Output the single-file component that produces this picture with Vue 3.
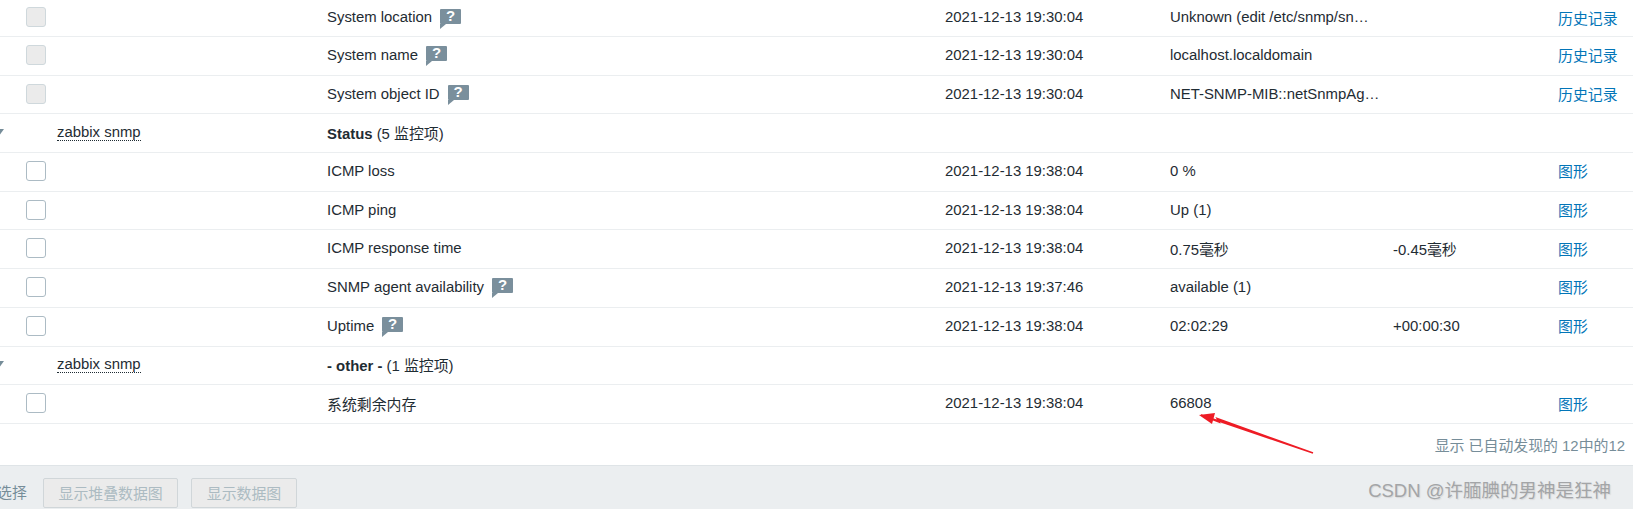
<script setup>
// rows of the latest data table, from top to bottom
const rows = [
  { name: 'System location', tip: true, time: '2021-12-13 19:30:04', value: 'Unknown (edit /etc/snmp/sn…', link: '历史记录', off: true },
  { name: 'System name', tip: true, time: '2021-12-13 19:30:04', value: 'localhost.localdomain', link: '历史记录', off: true },
  { name: 'System object ID', tip: true, time: '2021-12-13 19:30:04', value: 'NET-SNMP-MIB::netSnmpAg…', link: '历史记录', off: true },
  { group: 'Status', count: '(5 监控项)' },
  { name: 'ICMP loss', time: '2021-12-13 19:38:04', value: '0 %', link: '图形' },
  { name: 'ICMP ping', time: '2021-12-13 19:38:04', value: 'Up (1)', link: '图形' },
  { name: 'ICMP response time', time: '2021-12-13 19:38:04', value: '0.75毫秒', change: '-0.45毫秒', link: '图形' },
  { name: 'SNMP agent availability', tip: true, time: '2021-12-13 19:37:46', value: 'available (1)', link: '图形' },
  { name: 'Uptime', tip: true, time: '2021-12-13 19:38:04', value: '02:02:29', change: '+00:00:30', link: '图形' },
  { group: '- other -', count: '(1 监控项)' },
  { name: '系统剩余内存', time: '2021-12-13 19:38:04', value: '66808', link: '图形' }
]
</script>

<template>
  <div class="page">
    <div class="table">
      <div v-for="(row, i) in rows" :key="i" class="row">
        <template v-if="row.group">
          <div class="toggle"><span class="arrow"></span></div>
          <div class="host"><span class="host-link">zabbix snmp</span></div>
          <div class="group-title"><b>{{ row.group }}</b> {{ row.count }}</div>
        </template>
        <template v-else>
          <div class="toggle"><span class="check" :class="{ off: row.off }"></span></div>
          <div class="host"></div>
          <div class="item">
            {{ row.name }}
            <span v-if="row.tip" class="tip">?</span>
          </div>
          <div>{{ row.time }}</div>
          <div>{{ row.value }}</div>
          <div>{{ row.change }}</div>
          <div><a class="link">{{ row.link }}</a></div>
        </template>
      </div>
    </div>

    <div class="note">显示 已自动发现的 12中的12</div>

    <div class="footer">
      <span class="selected">选择</span>
      <button class="btn" disabled>显示堆叠数据图</button>
      <button class="btn" disabled>显示数据图</button>
      <span class="watermark">CSDN @许腼腆的男神是狂神</span>
    </div>

    <!-- red annotation arrow drawn over the screenshot -->
    <svg class="annotation" width="130" height="50" viewBox="0 0 130 50">
      <path d="M8 5 L120 43 L24 8.5 L26 12 Z" fill="#ee1c25" stroke="#ee1c25" stroke-width="1.5" />
      <path d="M6 5 L22 3 L19 14 Z" fill="#ee1c25" />
    </svg>
  </div>
</template>

<style>
html, body {
  margin: 0;
  background: #fff;
  overflow: hidden;
}
</style>

<style scoped>
.page {
  position: relative;
  width: 1633px;
  height: 509px;
  display: flex;
  flex-direction: column;
  overflow: hidden;
  font-family: "Liberation Sans", "Noto Sans CJK SC", sans-serif;
  font-size: 14.9px;
  color: #1f2c33;
}

.table {
  display: flex;
  flex-direction: column;
}

.row {
  display: grid;
  grid-template-columns: 57px 270px 618px 225px 223px 165px 1fr;
  align-items: center;
  height: 38.7px;
  box-sizing: border-box;
  padding-bottom: 2px;
  border-bottom: 1.5px solid #ebeef0;
}

.row:first-child {
  height: 37px;
}

.toggle {
  position: relative;
  height: 20px;
}

.check {
  position: absolute;
  left: 26px;
  top: 0;
  width: 20px;
  height: 20px;
  box-sizing: border-box;
  background: #fff;
  border: 1px solid #acbbc4;
  border-radius: 3px;
}

.check.off {
  background: #ebebeb;
  border-color: #cfd8dc;
}

.arrow {
  position: absolute;
  left: -6px;
  top: 7px;
  border-left: 5px solid transparent;
  border-right: 5px solid transparent;
  border-top: 7px solid #768d99;
}

.host-link {
  border-bottom: 1px dotted #1f2c33;
}

.group-title {
  grid-column: span 5;
}

.item {
  display: flex;
  align-items: center;
  gap: 8px;
}

.tip {
  position: relative;
  top: -1px;
  width: 21px;
  height: 15px;
  border-radius: 1px;
  background: #7a8f9c;
  color: #fff;
  font-size: 15px;
  font-weight: bold;
  line-height: 13px;
  text-align: center;
}

.tip::after {
  content: "";
  position: absolute;
  left: 0;
  top: 15px;
  border-top: 5px solid #7a8f9c;
  border-right: 6px solid transparent;
}

.link {
  color: #0275b8;
}

.note {
  height: 41px;
  padding-right: 8px;
  display: flex;
  align-items: center;
  justify-content: flex-end;
  color: #768d99;
}

.footer {
  flex: 1;
  position: relative;
  display: flex;
  align-items: flex-start;
  gap: 13px;
  padding-top: 12px;
  background: #ebeef0;
  border-top: 1px solid #dfe4e7;
}

.selected {
  margin-left: -3px;
  width: 33px;
  line-height: 30px;
  color: #768d99;
}

.btn {
  height: 30px;
  padding: 0 14.5px;
  font: inherit;
  color: #acbbc2;
  background: #ebebeb;
  border: 1px solid #d0d6d9;
  border-radius: 2px;
}

.watermark {
  position: absolute;
  right: 22px;
  top: 10px;
  font-size: 18.5px;
  color: #a3a5a7;
  text-shadow: 1px 1px 1px #d8d8d8;
}

.annotation {
  position: absolute;
  left: 1193px;
  top: 410px;
}
</style>
